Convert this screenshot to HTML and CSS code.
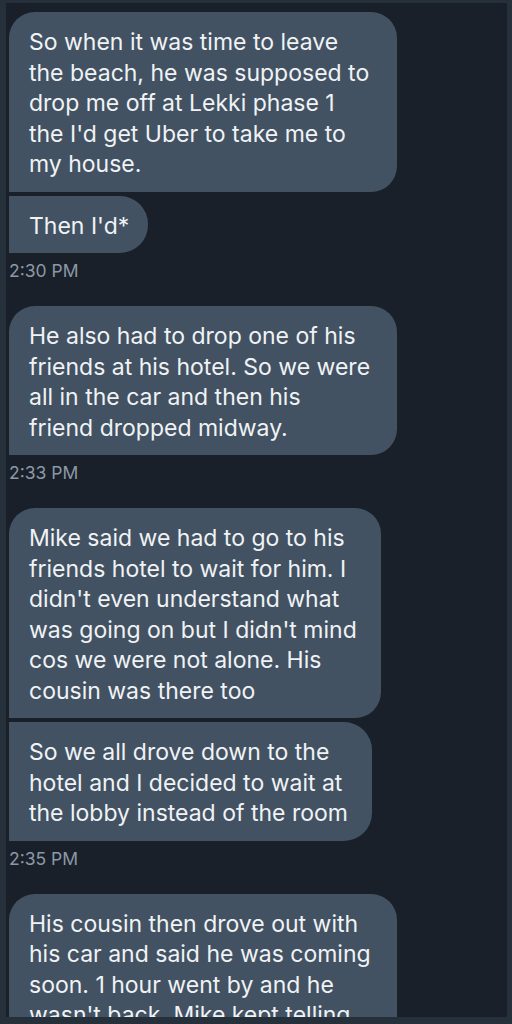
FILE: index.html
```html
<!DOCTYPE html>
<html lang="en">
<head>
<meta charset="utf-8">
<title>Messages</title>
<link rel="stylesheet" href="styles.css">
</head>
<body>
<div class="frame">
  <div class="thread">
    <div class="group">
      <div class="bubble first full">So when it was time to leave<br>the beach, he was supposed to<br>drop me off at Lekki phase 1<br>the I'd get Uber to take me to<br>my house.</div>
      <div class="bubble next short">Then I'd*</div>
      <div class="time">2:30 PM</div>
    </div>
    <div class="group">
      <div class="bubble first full">He also had to drop one of his<br>friends at his hotel. So we were<br>all in the car and then his<br>friend dropped midway.</div>
      <div class="time">2:33 PM</div>
    </div>
    <div class="group">
      <div class="bubble first">Mike said we had to go to his<br>friends hotel to wait for him. I<br>didn't even understand what<br>was going on but I didn't mind<br>cos we were not alone. His<br>cousin was there too</div>
      <div class="bubble next">So we all drove down to the<br>hotel and I decided to wait at<br>the lobby instead of the room</div>
      <div class="time">2:35 PM</div>
    </div>
    <div class="group">
      <div class="bubble first full">His cousin then drove out with<br>his car and said he was coming<br>soon. 1 hour went by and he<br>wasn't back. Mike kept telling<br>me he would be back soon</div>
    </div>
  </div>
</div>
</body>
</html>
```

FILE: styles.css
```css
html, body {
  margin: 0;
  padding: 0;
  background: #26303b;
}

.frame {
  width: 512px;
  height: 1024px;
  box-sizing: border-box;
  padding: 3px 5px 7px 6px;
  background: #26303b;
}

.thread {
  height: 100%;
  overflow: hidden;
  background: #1a202a;
  padding: 9px 0 0 3px;
  box-sizing: border-box;
  display: flex;
  flex-direction: column;
  gap: 25px;
}

.group {
  display: flex;
  flex-direction: column;
  align-items: flex-start;
  gap: 4px;
}

.bubble {
  box-sizing: border-box;
  background: #425262;
  color: #f0f2f5;
  font-family: Inter, "Liberation Sans", sans-serif;
  font-size: 23px;
  line-height: 30.5px;
  padding: 15px 24px 12px 20px;
  white-space: nowrap;
  border-radius: 26px 26px 26px 0;
}

.bubble.full {
  width: 388px;
}

.bubble.next {
  border-radius: 0 28px 28px 0;
}

.bubble.short {
  padding-right: 19px;
}

.time {
  margin-top: 4px;
  font-family: Inter, "Liberation Sans", sans-serif;
  font-size: 17.5px;
  line-height: 20px;
  color: #8b98a5;
}
```
